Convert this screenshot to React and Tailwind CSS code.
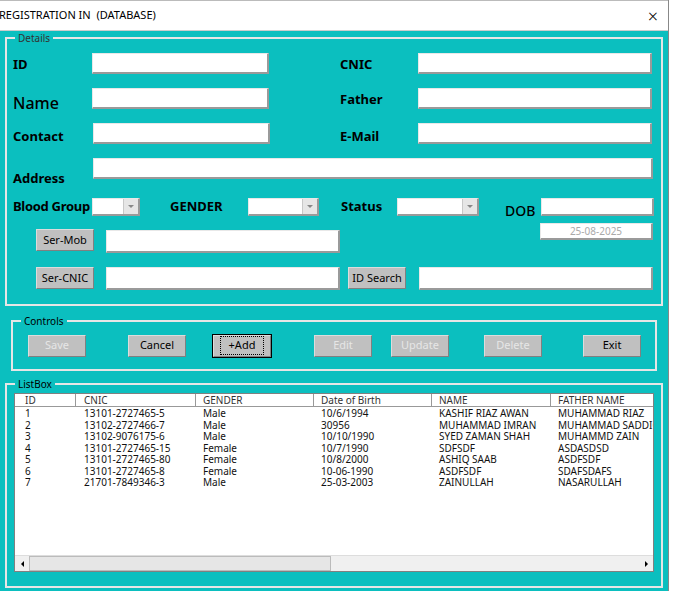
import React from 'react';

const label = "font-['DejaVu_Sans',sans-serif] font-bold text-[13px] text-black whitespace-nowrap";

function Box({ className = '', children }) {
  return (
    <div className={`bg-white border-t border-l border-[#e8e8e8] border-b-2 border-r-2 border-b-[#9a9a9a] border-r-[#9a9a9a] ${className}`}>
      {children}
    </div>
  );
}

function Combo({ w }) {
  return (
    <Box className={`${w} h-[18px] flex justify-end`}>
      <div className="w-[15px] h-full bg-[#e6e6e6] border-l border-[#c8c8c8] flex items-center justify-center">
        <div className="w-0 h-0 border-l-[3px] border-r-[3px] border-t-[3px] border-l-transparent border-r-transparent border-t-[#888]" />
      </div>
    </Box>
  );
}

function Btn({ children, w = 'w-[58px]', disabled, focus }) {
  return (
    <div className={`${w} h-[22px] flex items-center justify-center bg-[#c0c0c0] border border-[#dcdcdc] border-b-[#808080] border-r-[#808080] text-[11px] font-['Liberation_Sans',sans-serif] whitespace-nowrap ${disabled ? 'text-[#e6e6e6]' : 'text-black'} ${focus ? 'outline outline-1 outline-black' : ''}`}>
      <span className={focus ? 'border border-dotted border-black px-2' : ''}>{children}</span>
    </div>
  );
}

function Group({ title, serif, className, children }) {
  return (
    <div className={`relative border-2 border-[#e6e6e6] ${className}`}>
      <span className={`absolute -top-[8px] left-[8px] bg-[#0bbfbf] px-[3px] text-[10px] leading-[14px] ${serif ? "font-['Liberation_Serif',serif] text-[#333]" : "font-['Liberation_Sans',sans-serif] text-black"}`}>{title}</span>
      {children}
    </div>
  );
}

const rows = [
  ['1', '13101-2727465-5', 'Male', '10/6/1994', 'KASHIF RIAZ AWAN', 'MUHAMMAD RIAZ'],
  ['2', '13102-2727466-7', 'Male', '30956', 'MUHAMMAD IMRAN', 'MUHAMMAD SADDIQ'],
  ['3', '13102-9076175-6', 'Male', '10/10/1990', 'SYED ZAMAN SHAH', 'MUHAMMD ZAIN'],
  ['4', '13101-2727465-15', 'Female', '10/7/1990', 'SDFSDF', 'ASDASDSD'],
  ['5', '13101-2727465-80', 'Female', '10/8/2000', 'ASHIQ SAAB', 'ASDFSDF'],
  ['6', '13101-2727465-8', 'Female', '10-06-1990', 'ASDFSDF', 'SDAFSDAFS'],
  ['7', '21701-7849346-3', 'Male', '25-03-2003', 'ZAINULLAH', 'NASARULLAH'],
];
const cols = ['w-[61px] pl-[10px]', 'w-[120px] pl-[8px]', 'w-[118px] pl-[7px]', 'w-[118px] pl-[7px]', 'w-[119px] pl-[7px]', 'flex-1 pl-[7px]'];
const heads = ['ID', 'CNIC', 'GENDER', 'Date of Birth', 'NAME', 'FATHER NAME'];

export default function App() {
  return (
    <div className="w-[680px] h-[591px] flex bg-white overflow-hidden">
      <div className="w-[668px] flex flex-col border-t border-[#bbb]">
        <div className="h-[30px] bg-white flex items-center justify-between pr-[10px] border-b border-[#ccc]">
          <span className="text-[11px] font-['Liberation_Sans',sans-serif] text-black -ml-[1px]">REGISTRATION IN&nbsp; (DATABASE)</span>
          <span className="text-[18px] leading-none font-light text-black">×</span>
        </div>
        <div className="flex-1 bg-[#0bbfbf] px-[5px] pt-[6px] flex flex-col">
          <Group title="Details" serif className="h-[269px] pl-[6px] pt-[13px]">
            <div className="flex items-center h-[22px]">
              <span className={`${label} w-[79px] mt-[3px]`}>ID</span>
              <Box className="w-[177px] h-[21px]" />
              <span className={`${label} w-[78px] ml-[71px] mt-[3px]`}>CNIC</span>
              <Box className="w-[234px] h-[21px]" />
            </div>
            <div className="flex items-center h-[22px] mt-[13px]">
              <span className={`${label} w-[79px] text-[16px] mt-[9px]`} style={{ fontWeight: 500 }}>Name</span>
              <Box className="w-[177px] h-[21px]" />
              <span className={`${label} w-[78px] ml-[71px] mt-[3px]`}>Father</span>
              <Box className="w-[234px] h-[21px]" />
            </div>
            <div className="flex items-center h-[22px] mt-[13px]">
              <span className={`${label} w-[80px] mt-[7px]`}>Contact</span>
              <Box className="w-[177px] h-[21px]" />
              <span className={`${label} w-[78px] ml-[70px] mt-[7px]`}>E-Mail</span>
              <Box className="w-[234px] h-[21px]" />
            </div>
            <div className="flex h-[22px] mt-[14px]">
              <span className={`${label} w-[80px] mt-[11px]`}>Address</span>
              <Box className="w-[560px] h-[21px]" />
            </div>
            <div className="flex items-center h-[18px] mt-[18px]">
              <span className={`${label} w-[79px] tracking-[-0.3px]`}>Blood Group</span>
              <Combo w="w-[48px]" />
              <span className={`${label} w-[78px] ml-[30px]`}>GENDER</span>
              <Combo w="w-[71px]" />
              <span className={`${label} w-[56px] ml-[22px]`}>Status</span>
              <Combo w="w-[82px]" />
              <span className={`${label} text-[14px] w-[36px] ml-[26px] mt-[6px]`} style={{ fontWeight: 500 }}>DOB</span>
              <Box className="w-[113px] h-[18px]" />
            </div>
            <div className="flex h-[24px] mt-[14px]">
              <div className="ml-[23px] -mt-[1px]"><Btn>Ser-Mob</Btn></div>
              <Box className="w-[234px] h-[23px] ml-[12px]" />
              <Box className="w-[113px] h-[17px] ml-[200px] -mt-[7px] flex items-center justify-center text-[10px] text-[#aaa] font-['Liberation_Serif',serif]">25-08-2025</Box>
            </div>
            <div className="flex items-center h-[24px] mt-[12px]">
              <div className="ml-[23px]"><Btn>Ser-CNIC</Btn></div>
              <Box className="w-[234px] h-[23px] ml-[12px]" />
              <div className="ml-[8px]"><Btn>ID Search</Btn></div>
              <Box className="w-[234px] h-[23px] ml-[13px]" />
            </div>
          </Group>
          <Group title="Controls" className="h-[51px] mx-[6px] mt-[14px] flex items-center pl-[15px]">
            <Btn disabled>Save</Btn>
            <div className="ml-[42px]"><Btn>Cancel</Btn></div>
            <div className="ml-[27px]"><Btn focus>+Add</Btn></div>
            <div className="ml-[43px]"><Btn disabled>Edit</Btn></div>
            <div className="ml-[19px]"><Btn disabled>Update</Btn></div>
            <div className="ml-[35px]"><Btn disabled>Delete</Btn></div>
            <div className="ml-[41px]"><Btn>Exit</Btn></div>
          </Group>
          <Group title="ListBox" className="h-[205px] mt-[12px] px-[7px] pt-[8px]">
            <div className="h-[179px] bg-white border border-[#808080] flex flex-col font-['Liberation_Sans',sans-serif] text-[10px] text-[#111] leading-[11.5px] whitespace-nowrap overflow-hidden">
              <div className="flex border-b border-[#999] h-[13px] leading-[12px]">
                {heads.map((h, i) => (
                  <div key={h} className={`${cols[i]} ${i < 5 ? 'border-r border-[#999]' : ''} text-[#333]`}>{h}</div>
                ))}
              </div>
              <div className="flex-1 pt-[1px]">
                {rows.map((r) => (
                  <div key={r[0]} className="flex h-[11.5px]">
                    {r.map((c, i) => <div key={i} className={`${cols[i]} overflow-hidden`}>{c}</div>)}
                  </div>
                ))}
              </div>
              <div className="h-[16px] flex bg-[#f0f0f0] border-t border-[#ddd]">
                <div className="w-[14px] flex items-center justify-center">
                  <div className="w-0 h-0 border-t-[3px] border-b-[3px] border-r-[3px] border-t-transparent border-b-transparent border-r-black" />
                </div>
                <div className="w-[302px] bg-[#e6e6e6] border border-[#bbb]" />
                <div className="flex-1" />
                <div className="w-[14px] flex items-center justify-center">
                  <div className="w-0 h-0 border-t-[3px] border-b-[3px] border-l-[3px] border-t-transparent border-b-transparent border-l-black" />
                </div>
              </div>
            </div>
          </Group>
        </div>
      </div>
      <div className="flex-1 border-l border-[#888] bg-white" />
    </div>
  );
}
